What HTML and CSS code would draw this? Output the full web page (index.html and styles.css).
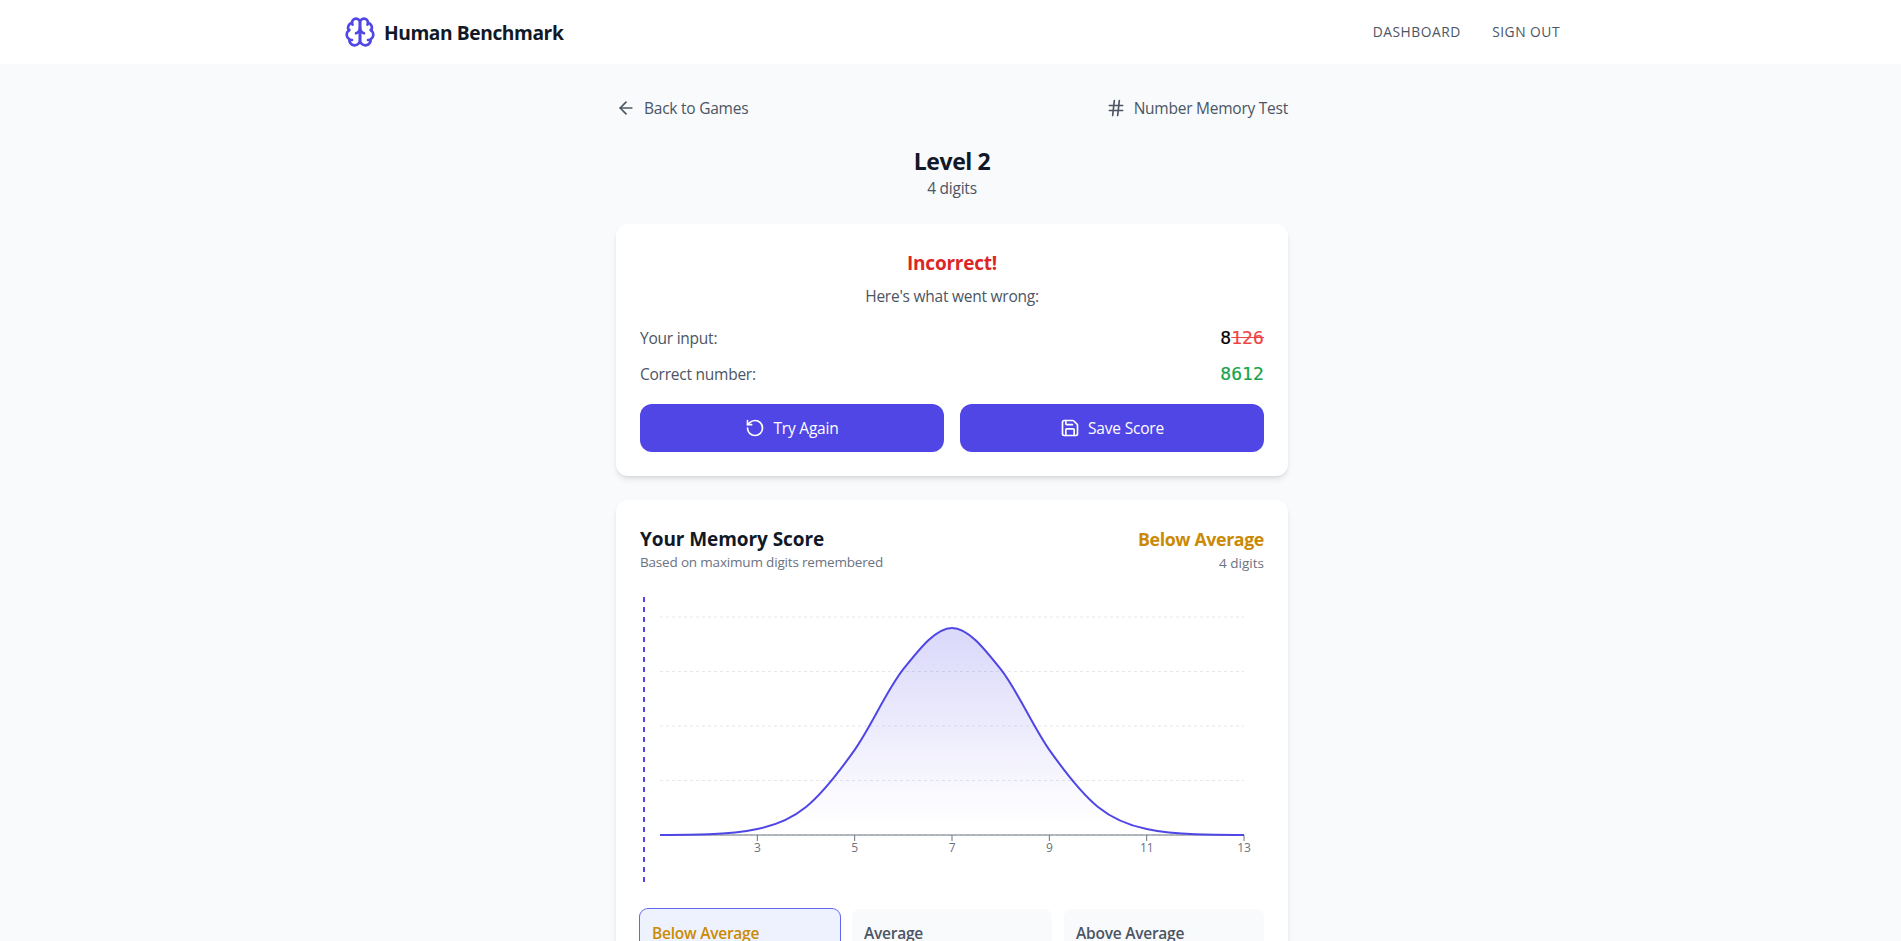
FILE: index.html
```html
<!DOCTYPE html>
<html lang="en">
<head>
<meta charset="utf-8">
<title>Human Benchmark</title>
<link rel="stylesheet" href="styles.css">
</head>
<body>
<div class="page">
  <header class="header">
    <div class="header-inner">
      <a class="brand">
        <svg class="icon icon-brand" viewBox="0 0 24 24"><path d="M12 5a3 3 0 1 0-5.997.125 4 4 0 0 0-2.526 5.77 4 4 0 0 0 .556 6.588A4 4 0 1 0 12 18Z"/><path d="M12 5a3 3 0 1 1 5.997.125 4 4 0 0 1 2.526 5.77 4 4 0 0 1-.556 6.588A4 4 0 1 1 12 18Z"/><path d="M15 13a4.5 4.5 0 0 1-3-4 4.5 4.5 0 0 1-3 4"/><path d="M17.599 6.5a3 3 0 0 0 .399-1.375"/><path d="M6.003 5.125A3 3 0 0 0 6.401 6.5"/><path d="M3.477 10.896a4 4 0 0 1 .585-.396"/><path d="M19.938 10.5a4 4 0 0 1 .585.396"/><path d="M6 18a4 4 0 0 1-1.967-.516"/><path d="M19.967 17.484A4 4 0 0 1 18 18"/></svg>
        <span class="brand-name">Human Benchmark</span>
      </a>
      <nav class="nav"><a>DASHBOARD</a><a>SIGN OUT</a></nav>
    </div>
  </header>
  <main class="main">
    <div class="topbar">
      <a class="with-icon"><svg class="icon" viewBox="0 0 24 24"><path d="m12 19-7-7 7-7"/><path d="M19 12H5"/></svg><span>Back to Games</span></a>
      <div class="with-icon"><svg class="icon" viewBox="0 0 24 24"><path d="M4 9h16M4 15h16M10 3 8 21M16 3l-2 18"/></svg><span>Number Memory Test</span></div>
    </div>
    <div class="level"><h1>Level 2</h1><p>4 digits</p></div>
    <section class="card">
      <h2 class="wrong">Incorrect!</h2>
      <p class="hint">Here's what went wrong:</p>
      <div class="rows">
        <div class="row"><span>Your input:</span><span class="mono">8<span class="bad">126</span></span></div>
        <div class="row"><span>Correct number:</span><span class="mono good">8612</span></div>
      </div>
      <div class="actions">
        <button><svg class="icon" viewBox="0 0 24 24"><path d="M3 12a9 9 0 1 0 9-9 9.75 9.75 0 0 0-6.74 2.74L3 8"/><path d="M3 3v5h5"/></svg><span>Try Again</span></button>
        <button><svg class="icon" viewBox="0 0 24 24"><path d="M15.2 3a2 2 0 0 1 1.4.6l3.8 3.8a2 2 0 0 1 .6 1.4V19a2 2 0 0 1-2 2H5a2 2 0 0 1-2-2V5a2 2 0 0 1 2-2z"/><path d="M17 21v-7a1 1 0 0 0-1-1H8a1 1 0 0 0-1 1v7"/><path d="M7 3v4a1 1 0 0 0 1 1h7"/></svg><span>Save Score</span></button>
      </div>
    </section>
    <section class="card">
      <div class="score-head">
        <div><h2 class="score-title">Your Memory Score</h2><p class="score-sub">Based on maximum digits remembered</p></div>
        <div class="rating"><div class="rating-name">Below Average</div><div class="rating-digits">4 digits</div></div>
      </div>
      <svg class="chart" width="624" height="288" viewBox="0 0 624 288">
        <defs><linearGradient id="fill" x1="0" y1="0" x2="0" y2="1"><stop offset="5%" stop-color="#4f46e5" stop-opacity=".2"/><stop offset="95%" stop-color="#4f46e5" stop-opacity="0"/></linearGradient></defs>
        <path class="grid" d="M20 20H604M20 74.5H604M20 129H604M20 183.5H604M20 238H604"/>
        <path fill="url(#fill)" d="M20 237.93C36.22 237.81 52.44 237.69 68.67 237.2C84.89 236.71 101.11 235.49 117.33 232.08C133.56 228.67 149.78 223.17 166 209.97C182.22 196.77 198.44 175.82 214.67 152.85C230.89 129.88 247.11 92.5 263.33 72.17C279.56 51.84 295.78 30.9 312 30.9C328.22 30.9 344.44 51.84 360.67 72.17C376.89 92.5 393.11 129.88 409.33 152.85C425.56 175.82 441.78 196.77 458 209.97C474.22 223.17 490.44 228.67 506.67 232.08C522.89 235.49 539.11 236.71 555.33 237.2C571.56 237.69 587.78 237.81 604 237.93V238H20Z"/>
        <path class="axis" d="M20 238H604M117.33 238v6M214.67 238v6M312 238v6M409.33 238v6M506.67 238v6M604 238v6"/>
        <path class="curve" d="M20 237.93C36.22 237.81 52.44 237.69 68.67 237.2C84.89 236.71 101.11 235.49 117.33 232.08C133.56 228.67 149.78 223.17 166 209.97C182.22 196.77 198.44 175.82 214.67 152.85C230.89 129.88 247.11 92.5 263.33 72.17C279.56 51.84 295.78 30.9 312 30.9C328.22 30.9 344.44 51.84 360.67 72.17C376.89 92.5 393.11 129.88 409.33 152.85C425.56 175.82 441.78 196.77 458 209.97C474.22 223.17 490.44 228.67 506.67 232.08C522.89 235.49 539.11 236.71 555.33 237.2C571.56 237.69 587.78 237.81 604 237.93"/>
        <path class="marker" d="M4 0V288"/>
        <g class="ticks"><text x="117.33" y="255">3</text><text x="214.67" y="255">5</text><text x="312" y="255">7</text><text x="409.33" y="255">9</text><text x="506.67" y="255">11</text><text x="604" y="255">13</text></g>
      </svg>
      <div class="tiles">
        <div class="tile tile-active">Below Average</div><div class="tile">Average</div><div class="tile">Above Average</div>
      </div>
    </section>
  </main>
</div>
</body>
</html>
```
FILE: styles.css
```css
* { box-sizing: border-box; margin: 0; }
html, body { height: 941px; overflow: hidden; background: #f9fafb; }
body { font: 15.5px/24px "Open Sans", "Noto Sans", sans-serif; letter-spacing: -.24px; color: #4b5563; }
.page { width: 1904px; height: 941px; overflow: hidden; }
.header { height: 64px; background: #fff; }
.header-inner { width: 1280px; height: 64px; margin: 0 auto; padding: 0 32px; display: flex; justify-content: space-between; align-items: center; }
.brand { display: flex; align-items: center; gap: 8px; color: #111827; font-size: 19.2px; letter-spacing: -.42px; font-weight: 700; line-height: 28px; }
.brand-name { padding-top: 2px; }
.icon { width: 20px; height: 20px; flex: none; fill: none; stroke: currentColor; stroke-width: 2; stroke-linecap: round; stroke-linejoin: round; }
.icon-brand { width: 32px; height: 32px; color: #4f46e5; }
.nav { display: flex; gap: 31.5px; font-size: 13.8px; letter-spacing: .5px; line-height: 20px; }
.main { width: 672px; margin: 0 auto; padding-top: 32px; }
.topbar { display: flex; justify-content: space-between; margin-bottom: 24px; }
.with-icon { display: flex; align-items: center; gap: 8px; }
.level { text-align: center; margin-bottom: 24px; }
.level h1 { font-size: 23px; letter-spacing: -.4px; line-height: 30px; padding-top: 2px; color: #111827; }
.card { background: #fff; border-radius: 12px; padding: 24px; margin-bottom: 24px; box-shadow: 0 4px 6px -1px rgba(0,0,0,.1), 0 2px 4px -2px rgba(0,0,0,.1); }
.wrong { font-size: 19px; line-height: 26px; padding-top: 2px; text-align: center; color: #dc2626; margin-bottom: 8px; }
.hint { text-align: center; margin-bottom: 16px; }
.rows { display: grid; gap: 8px; margin-bottom: 16px; }
.row { display: flex; justify-content: space-between; align-items: center; height: 28px; }
.mono { font: 18px/28px "DejaVu Sans Mono", monospace; letter-spacing: .1px; color: #000; -webkit-text-stroke: .2px currentColor; }
.bad { color: #ef4444; text-decoration: line-through; }
.good { color: #16a34a; }
.actions { display: grid; grid-template-columns: 1fr 1fr; gap: 16px; }
.actions button { height: 48px; border: 0; border-radius: 12px; background: #4f46e5; color: #fff; font: inherit; letter-spacing: -.2px; display: flex; align-items: center; justify-content: center; gap: 8px; }
.score-head { display: flex; justify-content: space-between; height: 49px; margin-bottom: 24px; }
.score-title { font-size: 19px; letter-spacing: -.08px; line-height: 26px; padding-top: 2px; color: #111827; }
.score-sub, .rating-digits { font-size: 13.5px; letter-spacing: -.18px; line-height: 20px; color: #6b7280; }
.rating { text-align: right; }
.rating-digits { letter-spacing: 0; }
.rating-name { font-size: 17.8px; letter-spacing: -.38px; line-height: 27px; padding-top: 2px; font-weight: 700; color: #ca8a04; }
.chart { display: block; margin-bottom: 24px; }
.grid { fill: none; stroke: #e5e7eb; stroke-dasharray: 3 3; }
.axis { fill: none; stroke: #6b7280; }
.curve { fill: none; stroke: #4f46e5; stroke-width: 2; }
.marker { fill: none; stroke: #4f46e5; stroke-width: 2; stroke-dasharray: 5 5; }
.ticks { font-size: 12px; letter-spacing: -.2px; fill: #6b7280; text-anchor: middle; }
.tiles { display: grid; grid-template-columns: repeat(3, 1fr); gap: 12px; }
.tile { height: 76px; border-radius: 8px; padding: 12px; background: #f9fafb; font-weight: 600; color: #4b5563; }
.tile-active { background: #eef2ff; color: #ca8a04; box-shadow: 0 0 0 1px #6366f1; }
```
